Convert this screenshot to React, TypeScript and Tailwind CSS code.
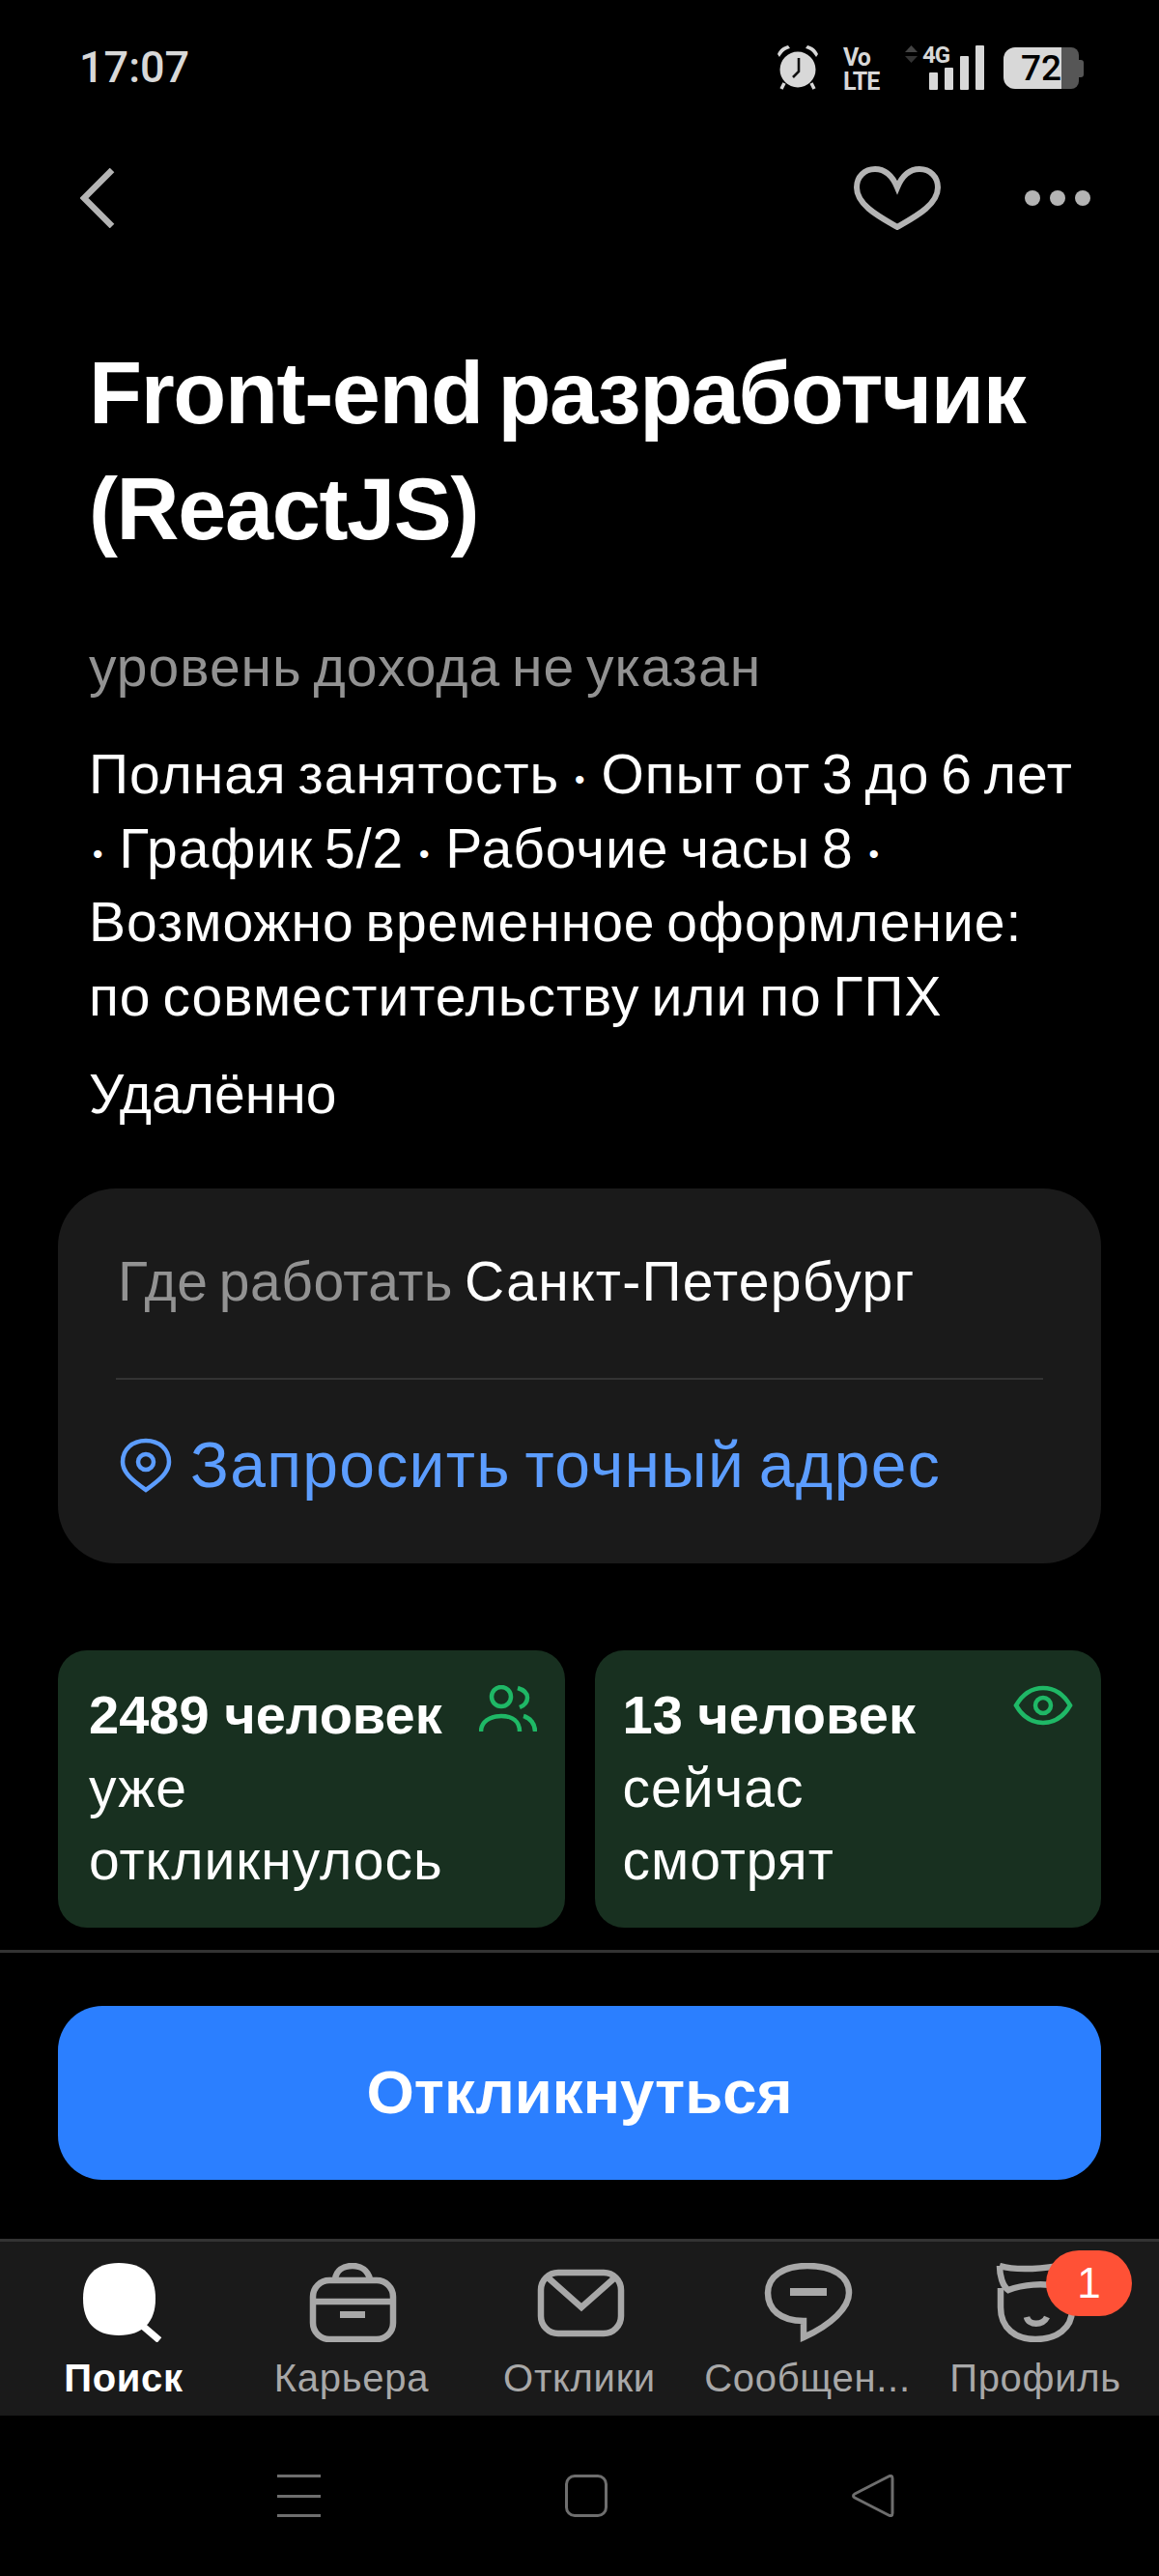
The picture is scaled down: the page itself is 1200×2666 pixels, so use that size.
import React from 'react';

const bodyFont = "font-['Liberation_Sans',Arial,sans-serif]";
// the reference font runs a little wider than Liberation, with narrow spaces
const bodyText = 'text-[57px] tracking-[1px] [word-spacing:-5px]';

function Dot() {
    return <span className="mx-[4px] text-[30px] leading-[0px] align-[4px]">•</span>;
}

function AlarmIcon() {
    return (
        <svg width="46" height="46" viewBox="0 0 46 46" className="block">
            <circle cx="23" cy="25" r="18.5" fill="#d8d8d8" />
            <path d="M2 9 C4 4 8 1 13 0 L15 3 C10 4 7 7 4 12 Z M44 9 C42 4 38 1 33 0 L31 3 C36 4 39 7 42 12 Z" fill="#d8d8d8" />
            <path d="M9 39 L6 45 M37 39 L40 45" stroke="#d8d8d8" strokeWidth="3.5" fill="none" />
            <path d="M24 13 L24 27 L18 33" stroke="#111" strokeWidth="2.6" fill="none" />
        </svg>
    );
}

function SignalIcon() {
    return (
        <div className="flex items-end gap-[7px] h-[46px]">
            <div className="w-[9px] h-[18px] bg-[#d8d8d8] rounded-[1px]" />
            <div className="w-[9px] h-[23px] bg-[#d8d8d8] rounded-[1px]" />
            <div className="w-[9px] h-[35px] bg-[#d8d8d8] rounded-[1px]" />
            <div className="w-[9px] h-[46px] bg-[#d8d8d8] rounded-[1px]" />
        </div>
    );
}

function StatusBar() {
    return (
        <div className="h-[155px] shrink-0 flex items-start justify-between pl-[82px] pr-[78px] pt-[47px] text-[#d8d8d8]">
            <span className="text-[45px] leading-[46px] font-medium font-['Roboto',sans-serif]">17:07</span>
            <div className="flex items-start">
                <AlarmIcon />
                <div className="ml-[24px] w-[40px] flex flex-col font-bold font-['Roboto',sans-serif] text-[25px] leading-[25px] tracking-[-1px]">
                    <span>Vo</span>
                    <span>LTE</span>
                </div>
                <div className="ml-[24px] w-[82px] h-[46px] flex items-start">
                    <svg width="13" height="18" viewBox="0 0 13 18" className="block shrink-0">
                        <path d="M6.5 0 L13 7 H0 Z" fill="#444" />
                        <path d="M6.5 18 L13 11 H0 Z" fill="#333" />
                    </svg>
                    <div className="relative ml-[12px]">
                        <SignalIcon />
                        <span className="absolute left-[-7px] top-[-2px] text-[24px] leading-[24px] font-bold font-['Roboto',sans-serif] tracking-[-1px]">4G</span>
                    </div>
                </div>
                <div className="ml-[20px] mt-[2px] flex items-center h-[43px]">
                    <div className="w-[60px] h-[43px] bg-[#d8d8d8] rounded-l-[12px] flex items-center justify-end text-black text-[37px] leading-[37px] font-medium font-['Roboto',sans-serif]">
                        72
                    </div>
                    <div className="w-[18px] h-[43px] bg-[#565656] rounded-r-[8px]" />
                    <div className="w-[5px] h-[18px] bg-[#565656] rounded-r-[3px]" />
                </div>
            </div>
        </div>
    );
}

function TopNav() {
    return (
        <div className="h-[100px] shrink-0 flex items-center justify-between pl-[83px] pr-[71px]">
            <svg width="36" height="62" viewBox="0 0 36 62" className="block">
                <path d="M33 2 L4 31 L33 60" fill="none" stroke="#b4b4b4" strokeWidth="6.5" />
            </svg>
            <div className="flex items-center gap-[87px]">
                <svg width="90" height="66" viewBox="0 0 90 66" className="block">
                    <path
                        d="M45 22 C40 10 32 3 22 3 C11 3 3 11 3 22 C3 40 26 52 45 63 C64 52 87 40 87 22 C87 11 79 3 68 3 C58 3 50 10 45 22 Z"
                        fill="none"
                        stroke="#b4b4b4"
                        strokeWidth="6"
                        strokeLinejoin="miter"
                    />
                </svg>
                <div className="flex gap-[10px]">
                    <div className="w-[16px] h-[16px] rounded-full bg-[#b4b4b4]" />
                    <div className="w-[16px] h-[16px] rounded-full bg-[#b4b4b4]" />
                    <div className="w-[16px] h-[16px] rounded-full bg-[#b4b4b4]" />
                </div>
            </div>
        </div>
    );
}

function PinIcon() {
    return (
        <svg width="54" height="57" viewBox="0 0 54 57" className="block shrink-0">
            <path d="M27 3 C41 3 51 12 51 25 C51 37 38 46 27 54 C16 46 3 37 3 25 C3 12 13 3 27 3 Z" fill="none" stroke="#5c9dff" strokeWidth="4.5" />
            <circle cx="27" cy="25" r="8" fill="none" stroke="#5c9dff" strokeWidth="4.5" />
        </svg>
    );
}

function PeopleIcon() {
    return (
        <svg width="60" height="48" viewBox="0 0 60 48" className="block">
            <circle cx="23" cy="12" r="10" fill="none" stroke="#1fb866" strokeWidth="4.5" />
            <path d="M2 48 C2 38 11 32 23 32 C35 32 42 38 42 48" fill="none" stroke="#1fb866" strokeWidth="4.5" />
            <path d="M40 3 C47 5 50 9 50 13 C50 18 47 21 42 23" fill="none" stroke="#1fb866" strokeWidth="4.5" />
            <path d="M46 32 C53 34 58 40 58 48" fill="none" stroke="#1fb866" strokeWidth="4.5" />
        </svg>
    );
}

function EyeIcon() {
    return (
        <svg width="62" height="42" viewBox="0 0 62 42" className="block">
            <path d="M3 21 C10 9 19 3 31 3 C43 3 52 9 59 21 C52 33 43 39 31 39 C19 39 10 33 3 21 Z" fill="none" stroke="#1fb866" strokeWidth="4.5" />
            <circle cx="31" cy="21" r="8" fill="none" stroke="#1fb866" strokeWidth="4.5" />
        </svg>
    );
}

function StatCard({ title, lines, icon, className }: { title: string; lines: string[]; icon: React.ReactNode; className: string }) {
    return (
        <div className={`relative h-[287px] rounded-[30px] bg-[#183020] pt-[29px] text-white leading-[75.5px] ${bodyText} ${className}`}>
            <div className="font-bold text-[56px] tracking-[0px] [word-spacing:0px]">{title}</div>
            {lines.map((line) => (
                <div key={line}>{line}</div>
            ))}
            <div className="absolute right-[29px] top-[36px]">{icon}</div>
        </div>
    );
}

function SearchTab() {
    return (
        <svg width="100" height="82" viewBox="0 0 100 82" className="block">
            <path d="M45 0 C72 0 83 14 83 37 C83 61 70 75 45 75 C20 75 8 61 8 37 C8 14 20 0 45 0 Z" fill="#fff" />
            <path d="M66 62 L87 80" stroke="#fff" strokeWidth="7" fill="none" />
        </svg>
    );
}

function CareerTab() {
    return (
        <svg width="100" height="82" viewBox="0 0 100 82" className="block" fill="none" stroke="#a8a8a8" strokeWidth="6.5">
            <path d="M33 17 C34 8 41 3 51 3 C60 3 67 8 69 17" />
            <rect x="10" y="18" width="83" height="61" rx="17" />
            <path d="M10 40 H93" />
            <rect x="38" y="50" width="26" height="7" fill="#a8a8a8" stroke="none" />
        </svg>
    );
}

function ResponsesTab() {
    return (
        <svg width="100" height="82" viewBox="0 0 100 82" className="block" fill="none" stroke="#a8a8a8" strokeWidth="6.5">
            <rect x="10" y="10" width="83" height="63" rx="18" />
            <path d="M16 14 L52 46 L88 14" />
        </svg>
    );
}

function MessagesTab() {
    return (
        <svg width="100" height="82" viewBox="0 0 100 82" className="block" fill="none" stroke="#a8a8a8" strokeWidth="6.5">
            <path d="M50 3 C77 3 93 14 93 31 C93 46 75 64 46 77 L46 60 C22 60 9 48 9 31 C9 14 25 3 50 3 Z" />
            <path d="M32 30 H70" strokeWidth="8" />
        </svg>
    );
}

function ProfileTab() {
    return (
        <svg width="100" height="82" viewBox="0 0 100 82" className="block" fill="none" stroke="#a8a8a8" strokeWidth="6.5">
            <path d="M13 3 C30 8 55 6 75 3" />
            <path d="M13 3 C13 13 16 24 22 28 C38 22 58 21 72 24" />
            <path d="M14 26 V46 C14 68 30 79 50 79 C72 79 88 68 88 48 V40" />
            <path d="M41 56 C43 65 58 65 62 56" />
        </svg>
    );
}

const tabs = [
    { label: 'Поиск', icon: <SearchTab />, active: true },
    { label: 'Карьера', icon: <CareerTab /> },
    { label: 'Отклики', icon: <ResponsesTab /> },
    { label: 'Сообщен...', icon: <MessagesTab /> },
    { label: 'Профиль', icon: <ProfileTab />, badge: 1 },
];

export default function App() {
    return (
        <div className={`w-[1200px] h-[2666px] bg-black flex flex-col overflow-hidden text-white ${bodyFont}`}>
            <StatusBar />
            <TopNav />

            {/* Vacancy content */}
            <main className="flex-1 min-h-0 px-[60px] overflow-hidden">
                <h1 className="mt-[92px] pl-[32px] text-[90px] leading-[120px] font-bold tracking-[-1.35px] [word-spacing:-8px]">
                    Front-end разработчик
                    <br />
                    (ReactJS)
                </h1>
                <p className={`mt-[65px] pl-[32px] leading-[76px] text-[#929292] ${bodyText}`}>уровень дохода не указан</p>
                <p className={`mt-[35px] pl-[32px] leading-[76.5px] ${bodyText}`}>
                    Полная занятость <Dot /> Опыт от 3 до 6 лет
                    <br />
                    <Dot /> График 5/2 <Dot /> Рабочие часы 8 <Dot />
                    <br />
                    Возможно временное оформление:
                    <br />
                    по совместительству или по ГПХ
                </p>
                <p className="mt-[25px] pl-[32px] leading-[76px] text-[57px]">Удалённо</p>

                <section className="mt-[60px] h-[388px] rounded-[60px] bg-[#1a1a1a] px-[60px]">
                    <div className="h-[198px] border-b-[2px] border-[#333] flex items-center pl-[2px] pb-[2px] text-[57px] [word-spacing:-5px]">
                        <span className="text-[#929292] tracking-[0.5px]">Где работать</span>
                        <span className="ml-[12px] tracking-[1.3px]">Санкт-Петербург</span>
                    </div>
                    <div className="mt-[60px] pl-[4px] flex items-center gap-[19px] text-[66px] leading-[57px] tracking-[1.3px] [word-spacing:-5px] text-[#5c9dff]">
                        <PinIcon />
                        <span>Запросить точный адрес</span>
                    </div>
                </section>

                <section className="mt-[90px] grid grid-cols-2 gap-[31px]">
                    <StatCard className="pl-[32px]" title="2489 человек" lines={['уже', 'откликнулось']} icon={<PeopleIcon />} />
                    <StatCard className="pl-[29px]" title="13 человек" lines={['сейчас', 'смотрят']} icon={<EyeIcon />} />
                </section>
            </main>

            {/* Apply button */}
            <div className="h-[299px] shrink-0 border-t-[3px] border-[#333] px-[60px] pt-[55px]">
                <button className="w-full h-[180px] rounded-[46px] bg-[#2b7fff] text-[63.5px] font-bold">
                    Откликнуться
                </button>
            </div>

            {/* Tab bar */}
            <nav className="h-[183px] shrink-0 border-t-[3px] border-[#333] bg-[#1a1a1a] px-[10px] grid grid-cols-5 pt-[22px]">
                {tabs.map((tab) => (
                    <div key={tab.label} className="relative flex flex-col items-center">
                        {tab.icon}
                        <span className={`mt-[14px] text-[40px] leading-[46px] tracking-[0.7px] ${tab.active ? 'text-white font-bold' : 'text-[#a8a8a8]'}`}>
                            {tab.label}
                        </span>
                        {tab.badge ? (
                            <div className="absolute left-[129px] top-[-13px] w-[89px] h-[68px] rounded-[34px] bg-[#ff5136] flex items-center justify-center text-[44px] text-white">
                                {tab.badge}
                            </div>
                        ) : null}
                    </div>
                ))}
            </nav>

            {/* System navigation */}
            <div className="h-[166px] shrink-0 pt-[61px] pl-[161px]">
                <div className="w-[891px] grid grid-cols-3 justify-items-center">
                    <div className="w-[45px] h-[44px] flex flex-col justify-between">
                        <div className="h-[3px] bg-[#6e6e6e]" />
                        <div className="h-[3px] bg-[#6e6e6e]" />
                        <div className="h-[3px] bg-[#6e6e6e]" />
                    </div>
                    <div className="w-[44px] h-[44px] rounded-[10px] border-[3px] border-[#6e6e6e]" />
                    <svg width="44" height="44" viewBox="0 0 44 44" className="block">
                        <path d="M42 4 V40 C42 43 40 43 38 42 L3 24 C1 23 1 21 3 20 L38 2 C40 1 42 1 42 4 Z" fill="none" stroke="#6e6e6e" strokeWidth="3" />
                    </svg>
                </div>
            </div>
        </div>
    );
}
